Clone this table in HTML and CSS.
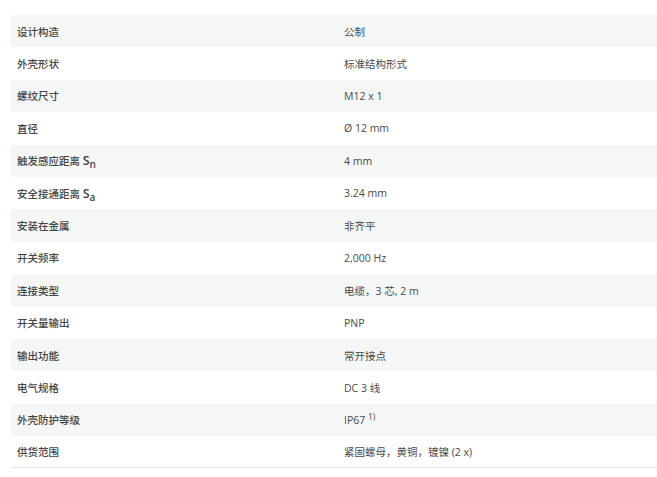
FILE: index.html
```
<!DOCTYPE html>
<html lang="zh">
<head>
<meta charset="utf-8">
<link rel="stylesheet" href="styles.css">
</head>
<body>
<div class="specs">
  <div class="row"><div class="k">设计构造</div><div class="v">公制</div></div>
  <div class="row"><div class="k">外壳形状</div><div class="v">标准结构形式</div></div>
  <div class="row"><div class="k">螺纹尺寸</div><div class="v">M12 x 1</div></div>
  <div class="row"><div class="k">直径</div><div class="v">Ø 12 mm</div></div>
  <div class="row"><div class="k">触发感应距离 <span class="sym">S<sub>n</sub></span></div><div class="v">4 mm</div></div>
  <div class="row"><div class="k">安全接通距离 <span class="sym">S<sub>a</sub></span></div><div class="v">3.24 mm</div></div>
  <div class="row"><div class="k">安装在金属</div><div class="v">非齐平</div></div>
  <div class="row"><div class="k">开关频率</div><div class="v">2,000 Hz</div></div>
  <div class="row"><div class="k">连接类型</div><div class="v">电缆，3 芯, 2 m</div></div>
  <div class="row"><div class="k">开关量输出</div><div class="v">PNP</div></div>
  <div class="row"><div class="k">输出功能</div><div class="v">常开接点</div></div>
  <div class="row"><div class="k">电气规格</div><div class="v">DC 3 线</div></div>
  <div class="row"><div class="k">外壳防护等级</div><div class="v">IP67 <sup>1)</sup></div></div>
  <div class="row last"><div class="k">供货范围</div><div class="v">紧固螺母，黄铜，镀镍 (2 x)</div></div>
</div>
</body>
</html>
```
FILE: styles.css
```
html, body {
  margin: 0;
  padding: 0;
  background: #fff;
  overflow: hidden;
}
body {
  font-family: "Open Sans", "Noto Sans CJK SC", sans-serif;
  font-size: 10.5px;
  color: #4a4a4a;
}
.specs {
  margin: 15px 0 0 11px;
  width: 654px;
}
.row {
  display: grid;
  grid-template-columns: 327px 1fr;
  height: 32.4px;
  align-items: center;
}
.row:nth-child(odd) {
  background: #f5f6f6;
}
.row.last {
  border-bottom: 1px solid #e6e8e8;
  box-sizing: border-box;
}
.k {
  padding-left: 6px;
  font-weight: 500;
  color: #444;
}
.v {
  padding-left: 6px;
  color: #4a4a4a;
}
.sym {
  font-size: 12.5px;
  font-weight: 600;
}
.sym sub {
  font-size: 10px;
  vertical-align: -3px;
  line-height: 0;
}
sup {
  font-size: 8.5px;
  vertical-align: 4px;
  line-height: 0;
}
```
